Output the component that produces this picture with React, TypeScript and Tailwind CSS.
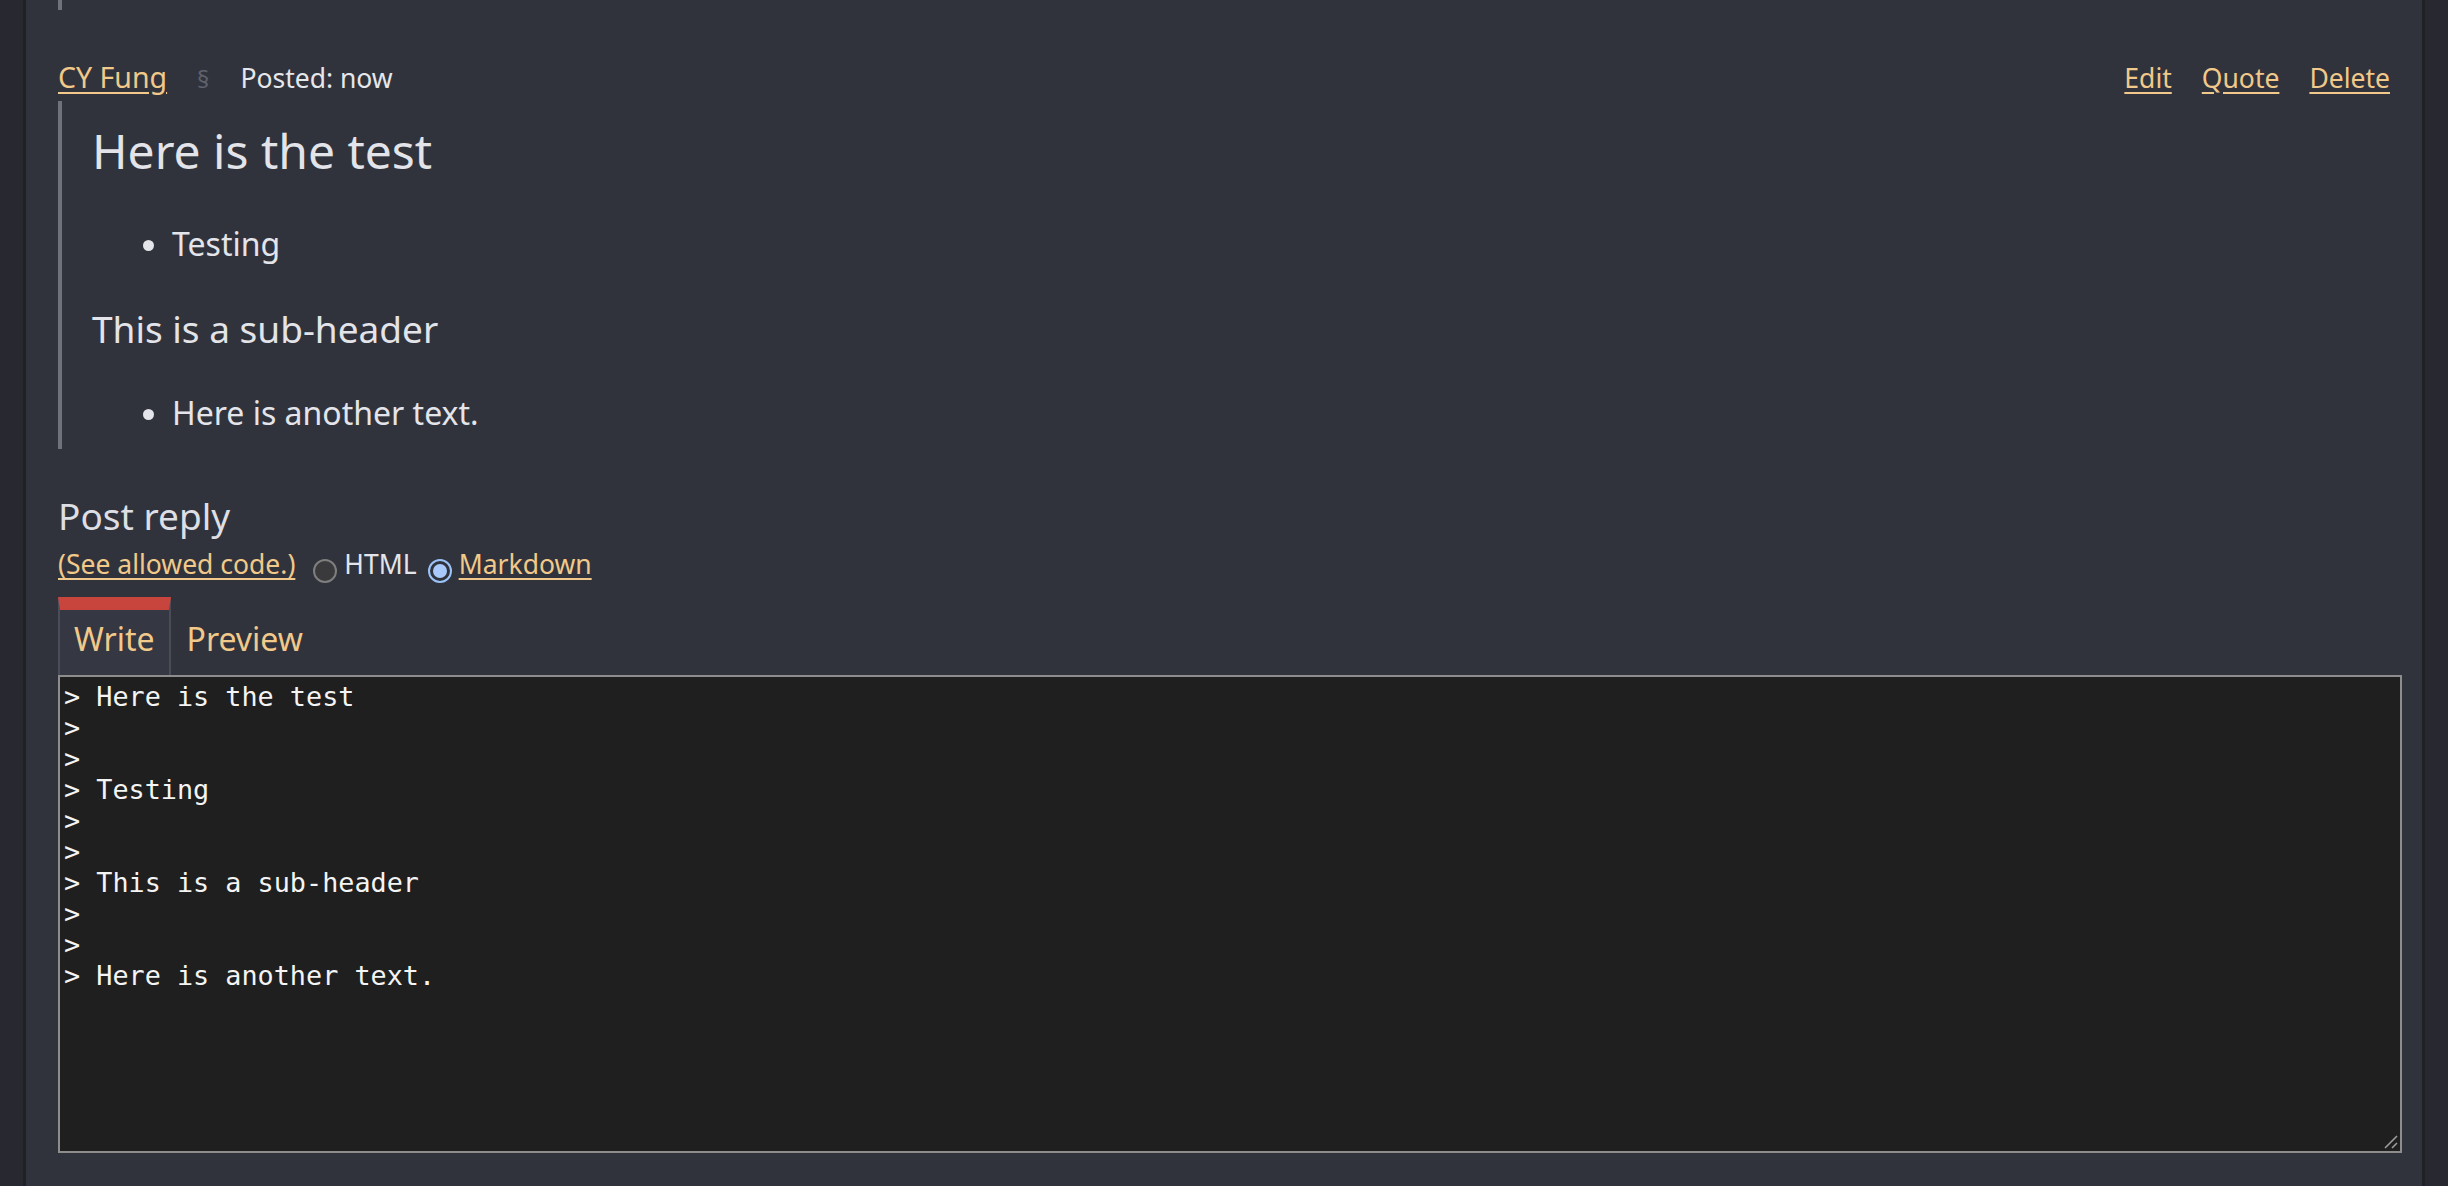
import React from 'react';

const quoteLines = [
  '> Here is the test',
  '>',
  '>',
  '> Testing',
  '>',
  '>',
  '> This is a sub-header',
  '>',
  '>',
  '> Here is another text.',
];

const Radio: React.FC<{ checked?: boolean }> = ({ checked }) =>
  checked ? (
    <span className="mt-[13px] flex h-[24px] w-[24px] shrink-0 items-center justify-center rounded-full border-2 border-[#9cc3f8] bg-[#31333c]">
      <span className="h-[14px] w-[14px] rounded-full bg-[#a9c9fa]" />
    </span>
  ) : (
    <span className="mt-[13px] h-[24px] w-[24px] shrink-0 rounded-full border-2 border-[#7e7e7e] bg-[#3a3a3c]" />
  );

export default function App() {
  return (
    <div className="h-[1186px] overflow-hidden bg-[#272830] px-[23px] font-['Noto_Sans',sans-serif]">
      <div className="h-full border-x-[3px] border-[#202127] bg-[#31333c] px-[32px] text-[#e4e5ea]">
        {/* tail of the previous post's quote */}
        <div className="h-[10px] w-[4px] bg-[#6f717b]" />

        {/* post header */}
        <div className="mt-[47px] flex items-baseline leading-[40px]">
          <a className="text-[28.5px] text-[#f1c98a] underline underline-offset-[4px]" href="#">
            CY Fung
          </a>
          <span className="ml-[30px] text-[24px] text-[#5f626d]">§</span>
          <span className="ml-[31px] text-[26.5px] text-[#e6e7eb]">Posted: now</span>
          <div className="ml-auto flex gap-[30px] text-[26.5px] text-[#f1c98a]">
            <a className="underline underline-offset-[4px]" href="#">Edit</a>
            <a className="underline underline-offset-[4px]" href="#">Quote</a>
            <a className="underline underline-offset-[4px]" href="#">Delete</a>
          </div>
        </div>

        {/* quoted body */}
        <blockquote className="mt-[2px] border-l-4 border-[#6f717b] pb-[14px] pl-[30px] pt-[20px]">
          <h1 className="text-[48px] font-normal leading-[60px] text-[#e3e4e9]">Here is the test</h1>
          <ul className="mt-[41px] list-disc pl-[80px] text-[32px] leading-[44px]">
            <li>Testing</li>
          </ul>
          <h2 className="mt-[37px] text-[37px] font-normal leading-[52px] text-[#e3e4e9]">This is a sub-header</h2>
          <ul className="mt-[36px] list-disc pl-[80px] text-[32px] leading-[44px]">
            <li>Here is another text.</li>
          </ul>
        </blockquote>

        {/* reply form */}
        <h3 className="mt-[43px] text-[37px] font-normal leading-[48px] text-[#dedfe4]">Post reply</h3>
        <div className="mt-[6px] flex h-[36px] items-start text-[26.5px] leading-[36px]">
          <a className="text-[#f1c98a] underline underline-offset-[4px]" href="#">
            (See allowed code.)
          </a>
          <span className="ml-[18px]" />
          <Radio />
          <span className="ml-[7px] text-[#e4e5ea]">HTML</span>
          <span className="ml-[11px]" />
          <Radio checked />
          <a className="ml-[7px] text-[#f1c98a] underline underline-offset-[4px]" href="#">
            Markdown
          </a>
        </div>

        <div className="mt-[15px] flex text-[32px] leading-[44px] text-[#f1c98a]">
          <div className="h-[78px] border-x-2 border-t-[13px] border-x-[#4a4c57] border-t-[#c7453c] bg-[#353742] px-[14px] pt-[7px]">
            Write
          </div>
          <div className="mt-[13px] h-[65px] border-x-2 border-transparent px-[14px] pt-[7px]">Preview</div>
        </div>

        <div className="relative -mr-[12px] h-[478px] border-2 border-[#8d8d8d] bg-[#1f1f1f] px-[4px] pt-[4px] font-['DejaVu_Sans_Mono',monospace] text-[26.8px] leading-[31px] text-[#f4f4f4] whitespace-pre">
          {quoteLines.map((l, i) => (
            <div key={i}>{l}</div>
          ))}
          <svg className="absolute bottom-[1px] right-[1px]" width="16" height="16" viewBox="0 0 16 16">
            <path d="M2 14 L14 2 M9 14 L14 9" stroke="#9c9c9c" strokeWidth="1.6" fill="none" />
          </svg>
        </div>
      </div>
    </div>
  );
}
